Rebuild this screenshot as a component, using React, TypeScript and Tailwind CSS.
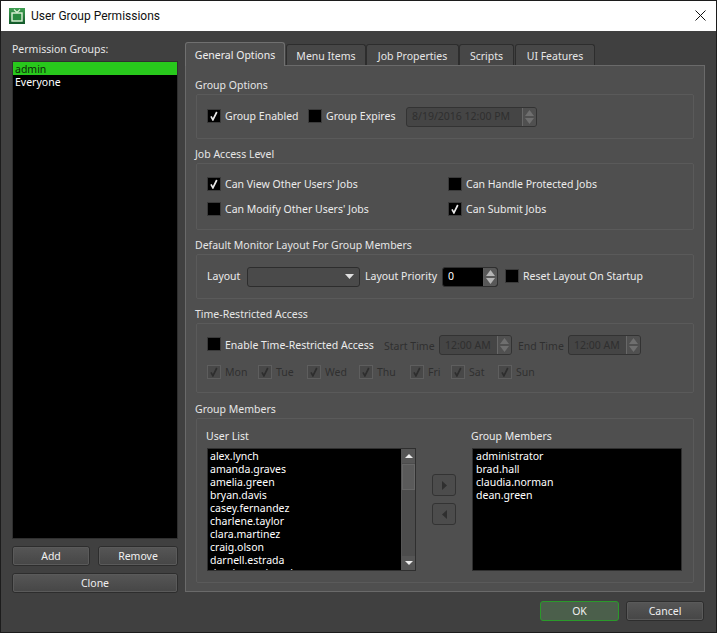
import React from "react";

const font = { fontFamily: '"Noto Sans", Tahoma, sans-serif' };

function Check({ checked, disabled }: { checked?: boolean; disabled?: boolean }) {
  return (
    <span
      className={
        "flex h-[14px] w-[14px] shrink-0 items-center justify-center border " +
        (disabled ? "border-[#5e5e5e] bg-[#484848]" : "border-[#3a3a3a] bg-black")
      }
    >
      {checked && (
        <svg width="10" height="10" viewBox="0 0 10 10">
          <path d="M2 5.4 L3.9 8.8 L7.8 1" fill="none" stroke={disabled ? "#2e2e2e" : "#e8e8e8"} strokeWidth="1.7" />
        </svg>
      )}
    </span>
  );
}

function Tri({ dir, color = "#d8d8d8", w = 8, h = 5 }: { dir: "up" | "down" | "left" | "right"; color?: string; w?: number; h?: number }) {
  const points = {
    up: `0,${h} ${w},${h} ${w / 2},0`,
    down: `0,0 ${w},0 ${w / 2},${h}`,
    left: `0,${h / 2} ${w},0 ${w},${h}`,
    right: `0,0 ${w},${h / 2} 0,${h}`,
  }[dir];
  return (
    <svg width={w} height={h} viewBox={`0 0 ${w} ${h}`}>
      <polygon points={points} fill={color} />
    </svg>
  );
}

function SpinArrows({ disabled }: { disabled?: boolean }) {
  return (
    <span className={"flex h-full w-[14px] shrink-0 flex-col items-center justify-center gap-[2px] border-l " + (disabled ? "border-[#686868] bg-[#505050]" : "border-[#5c5c5c] bg-[#585858]")}>
      <Tri dir="up" w={9} h={6} color={disabled ? "#6f6f6f" : "#b4b4b4"} />
      <Tri dir="down" w={9} h={6} color={disabled ? "#6f6f6f" : "#b4b4b4"} />
    </span>
  );
}

function Spin({ text, w, disabled }: { text: string; w: string; disabled?: boolean }) {
  return (
    <span className={"flex h-[20px] shrink-0 items-center overflow-hidden rounded-[3px] border " + w + " " + (disabled ? "border-[#333] bg-[#454545] text-[#2f2f2f]" : "border-[#2f2f2f] bg-black text-white")}>
      <span className="flex-1 pl-[5px] whitespace-nowrap">{text}</span>
      <SpinArrows disabled={disabled} />
    </span>
  );
}

function Section({ title, boxClass, children }: { title: string; boxClass: string; children: React.ReactNode }) {
  return (
    <div className="flex flex-col">
      <div className="-ml-[1px] h-[16px] leading-[14px] text-[#e6e6e6]">{title}</div>
      <div className={"rounded-[2px] border border-[#5a5a5a] " + boxClass}>{children}</div>
    </div>
  );
}

function Btn({ label, className = "" }: { label: string; className?: string }) {
  return (
    <button className={"flex h-[20px] items-center justify-center rounded-[3px] border border-[#2d2d2d] bg-gradient-to-b from-[#565656] to-[#464646] text-[#f0f0f0] outline outline-1 -outline-offset-2 outline-[#5a5a5a] " + className}>
      {label}
    </button>
  );
}

function Tab({ label, w, active }: { label: string; w: string; active?: boolean }) {
  return active ? (
    <div className={"z-10 -mb-[1px] flex h-[24px] items-center justify-center rounded-t-[3px] border border-b-0 border-[#707070] bg-[#4f4f4f] pt-[2px] text-[#f0f0f0] " + w}>{label}</div>
  ) : (
    <div className={"mt-[2px] flex h-[21px] items-center justify-center rounded-t-[3px] border border-b-0 border-[#2d2d2d] bg-[#474747] pt-[2px] text-[#e6e6e6] " + w}>{label}</div>
  );
}

function DayCheck({ label, w }: { label: string; w: string }) {
  return (
    <span className={"flex items-center gap-[4px] text-[#2f2f2f] " + w}>
      <Check checked disabled />
      {label}
    </span>
  );
}

function CheckRow({ label, checked, className = "", raised }: { label: string; checked?: boolean; className?: string; raised?: boolean }) {
  return (
    <span className={"flex items-center gap-[4px] whitespace-nowrap text-[#ececec] " + (raised ? "mb-[2px] " : "") + className}>
      <Check checked={checked} />
      <span className={raised ? "pt-[2px]" : ""}>{label}</span>
    </span>
  );
}

const users = ["alex.lynch", "amanda.graves", "amelia.green", "bryan.davis", "casey.fernandez", "charlene.taylor", "clara.martinez", "craig.olson", "darnell.estrada", "derek.woodward"];
const members = ["administrator", "brad.hall", "claudia.norman", "dean.green"];

export default function App() {
  return (
    <div style={font} className="flex h-[633px] w-[717px] flex-col overflow-hidden border border-[#1c1c1c] bg-[#404040] text-[10.5px] leading-[13px]">
      <div className="flex h-[30px] shrink-0 items-center bg-white pl-[8px] pr-[10px] text-[12px] text-[#111]" style={{ fontFamily: "Roboto, sans-serif" }}>
        <svg width="16" height="16" viewBox="0 0 16 16" className="mr-[6px]">
          <defs>
            <linearGradient id="g" x1="0" y1="0" x2="0" y2="1">
              <stop offset="0" stopColor="#3fa052" />
              <stop offset="1" stopColor="#12592a" />
            </linearGradient>
          </defs>
          <rect x="0" y="0" width="16" height="16" fill="url(#g)" />
          <path d="M5 1.5 L8 4.5 L11 1.5" fill="none" stroke="#dff3d8" strokeWidth="1.2" />
          <rect x="3" y="5" width="10" height="8" fill="#2a8a40" stroke="#dff3d8" strokeWidth="1.4" />
        </svg>
        <span>User Group Permissions</span>
        <svg width="11" height="11" viewBox="0 0 11 11" className="mb-[2px] ml-auto">
          <path d="M0.5 0.5 L10.5 10.5 M10.5 0.5 L0.5 10.5" stroke="#111" strokeWidth="1" />
        </svg>
      </div>

      <div className="flex min-h-0 flex-1 flex-col">
        <div className="flex h-[569px] shrink-0">
          <div className="ml-[11px] mt-[12px] flex w-[166px] shrink-0 flex-col">
            <div className="h-[18px] leading-[12px] text-[#e6e6e6]">Permission Groups:</div>
            <div className="h-[478px] border border-[#2f2f2f] bg-black text-white">
              <div className="h-[13px] bg-[#28c81c] pl-[2px] leading-[15px] text-[#0b2a08]">admin</div>
              <div className="h-[13px] pl-[2px] leading-[15px]">Everyone</div>
            </div>
            <div className="mt-[7px] flex gap-[8px]">
              <Btn label="Add" className="w-[78px]" />
              <Btn label="Remove" className="w-[80px]" />
            </div>
            <Btn label="Clone" className="mt-[7px] w-[166px]" />
          </div>

          <div className="ml-[7px] mt-[11px] flex w-[520px] shrink-0 flex-col">
            <div className="flex h-[23px] items-start">
              <Tab label="General Options" w="w-[100px]" active />
              <Tab label="Menu Items" w="w-[80px] ml-[1px]" />
              <Tab label="Job Properties" w="w-[93px]" />
              <Tab label="Scripts" w="w-[55px]" />
              <Tab label="UI Features" w="w-[80px] ml-[1px]" />
            </div>
            <div className="flex h-[527px] flex-col border border-[#6a6a6a] bg-[#4f4f4f] pl-[10px] pr-[10px] pt-[12px]">
              <Section title="Group Options" boxClass="h-[45px] flex items-center pl-[10px]">
                <CheckRow label="Group Enabled" checked raised className="w-[101px]" />
                <CheckRow label="Group Expires" raised className="w-[98px]" />
                <Spin text="8/19/2016 12:00 PM" w="w-[131px]" disabled />
              </Section>

              <div className="h-[8px] shrink-0" />
              <Section title="Job Access Level" boxClass="h-[67px] grid grid-cols-[241px_1fr] content-start gap-y-[11px] pl-[10px] pt-[13px]">
                <CheckRow label="Can View Other Users' Jobs" checked />
                <CheckRow label="Can Handle Protected Jobs" />
                <CheckRow label="Can Modify Other Users' Jobs" />
                <CheckRow label="Can Submit Jobs" checked />
              </Section>

              <div className="h-[8px] shrink-0" />
              <Section title="Default Monitor Layout For Group Members" boxClass="h-[45px] flex items-center pl-[10px] text-[#ececec]">
                <span className="w-[40px]">Layout</span>
                <span className="flex h-[20px] w-[113px] shrink-0 items-center justify-end rounded-[3px] border border-[#2d2d2d] bg-[#4a4a4a] pr-[5px]">
                  <Tri dir="down" w={9} h={5} color="#e0e0e0" />
                </span>
                <span className="ml-[5px] w-[77px] whitespace-nowrap">Layout Priority</span>
                <Spin text="0" w="w-[56px]" />
                <CheckRow label="Reset Layout On Startup" raised className="ml-[7px]" />
              </Section>

              <div className="h-[8px] shrink-0" />
              <Section title="Time-Restricted Access" boxClass="h-[70px] flex flex-col pl-[10px] pt-[11px]">
                <div className="flex items-center">
                  <CheckRow label="Enable Time-Restricted Access" raised className="w-[177px]" />
                  <span className="w-[55px] whitespace-nowrap pt-[2px] text-[#2f2f2f]">Start Time</span>
                  <Spin text="12:00 AM" w="w-[73px]" disabled />
                  <span className="ml-[6px] w-[50px] whitespace-nowrap pt-[2px] text-[#2f2f2f]">End Time</span>
                  <Spin text="12:00 AM" w="w-[73px]" disabled />
                </div>
                <div className="mt-[10px] flex items-center">
                  <DayCheck label="Mon" w="w-[51px]" />
                  <DayCheck label="Tue" w="w-[49px]" />
                  <DayCheck label="Wed" w="w-[52px]" />
                  <DayCheck label="Thu" w="w-[51px]" />
                  <DayCheck label="Fri" w="w-[41px]" />
                  <DayCheck label="Sat" w="w-[47px]" />
                  <DayCheck label="Sun" w="w-[50px]" />
                </div>
              </Section>

              <div className="h-[9px] shrink-0" />
              <Section title="Group Members" boxClass="h-[165px] flex pl-[10px] pt-[11px] text-[#ececec]">
                <div className="flex w-[209px] shrink-0 flex-col">
                  <div className="-ml-[1px] h-[18px]">User List</div>
                  <div className="flex h-[123px] border border-[#2f2f2f] bg-black">
                    <div className="flex-1 overflow-hidden pl-[2px] text-white">
                      {users.map((u) => (
                        <div key={u} className="h-[13px] leading-[15px]">{u}</div>
                      ))}
                    </div>
                    <div className="flex w-[14px] flex-col border-l border-[#555] bg-[#4c4c4c]">
                      <div className="flex h-[14px] items-center justify-center bg-[#555]">
                        <Tri dir="up" w={8} h={4} color="#eee" />
                      </div>
                      <div className="mt-[1px] h-[26px] border border-[#666] bg-[#5a5a5a]" />
                      <div className="flex-1" />
                      <div className="flex h-[14px] items-center justify-center bg-[#555]">
                        <Tri dir="down" w={8} h={4} color="#eee" />
                      </div>
                    </div>
                  </div>
                </div>
                <div className="ml-[16px] mt-[44px] flex w-[24px] shrink-0 flex-col gap-[7px]">
                  <span className="flex h-[22px] items-center justify-center rounded-[3px] border border-[#333] bg-[#4c4c4c]">
                    <Tri dir="right" w={5} h={9} color="#2f2f2f" />
                  </span>
                  <span className="flex h-[22px] items-center justify-center rounded-[3px] border border-[#333] bg-[#4c4c4c]">
                    <Tri dir="left" w={5} h={9} color="#2f2f2f" />
                  </span>
                </div>
                <div className="ml-[16px] flex w-[210px] shrink-0 flex-col">
                  <div className="-ml-[1px] h-[18px]">Group Members</div>
                  <div className="h-[123px] border border-[#2f2f2f] bg-black pl-[3px] text-white">
                    {members.map((u) => (
                      <div key={u} className="h-[13px] leading-[15px]">{u}</div>
                    ))}
                  </div>
                </div>
              </Section>
            </div>
          </div>
        </div>

        <div className="flex justify-end gap-[7px] pr-[12px] pt-[1px]">
          <button className="flex h-[20px] w-[79px] items-center justify-center rounded-[3px] border border-[#2a9a2a] bg-[#4b5f4b] text-[#f0f0f0]">OK</button>
          <Btn label="Cancel" className="w-[78px]" />
        </div>
      </div>
    </div>
  );
}
